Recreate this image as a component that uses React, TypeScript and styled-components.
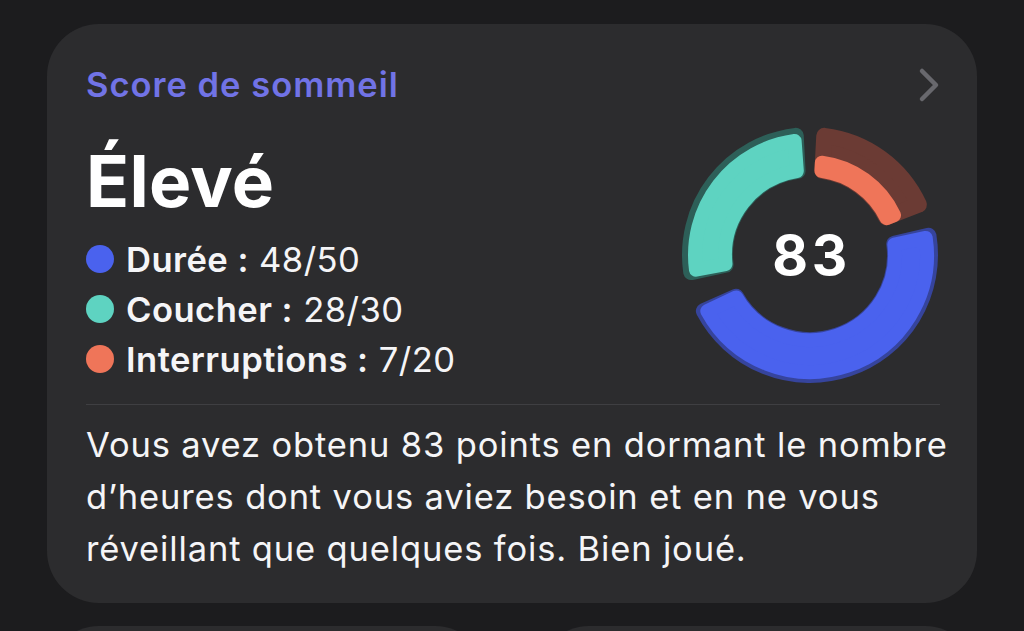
import React from 'react'
import styled, { createGlobalStyle } from 'styled-components'

const GlobalStyle = createGlobalStyle`
  html, body {
    margin: 0;
    padding: 0;
    background: #1c1c1e;
    overflow: hidden;
  }
  body {
    font-family: Inter, 'Noto Sans', sans-serif;
    color: #f5f5f7;
    -webkit-font-smoothing: antialiased;
  }
`

const Page = styled.div`
  width: 1024px;
  height: 631px;
  box-sizing: border-box;
  padding: 24px 47px 0;
  display: flex;
  flex-direction: column;
  gap: 23px;
  overflow: hidden;
`

const Card = styled.section`
  flex: none;
  height: 579px;
  box-sizing: border-box;
  padding: 38px 37px 0 39px;
  background: #2c2c2e;
  border-radius: 52px;
  display: flex;
  flex-direction: column;
`

const Header = styled.div`
  display: flex;
  align-items: center;
  justify-content: space-between;
  height: 46px;
`

const Title = styled.h2`
  margin: 0;
  font-size: 34.5px;
  line-height: 46px;
  letter-spacing: 1px;
  font-weight: 600;
  color: #7173e6;
`

const Chevron = styled.svg`
  width: 22px;
  height: 36px;
`

const MainRow = styled.div`
  display: flex;
  justify-content: space-between;
  align-items: flex-start;
  height: 277px;
`

const Summary = styled.div`
  display: flex;
  flex-direction: column;
  padding-top: 38px;
`

const Level = styled.h1`
  margin: 0 0 18px;
  font-size: 71px;
  line-height: 70px;
  letter-spacing: 0.3px;
  font-weight: 700;
  color: #ffffff;
`

const Legend = styled.ul`
  list-style: none;
  margin: 0;
  padding: 0;
`

const LegendRow = styled.li`
  display: flex;
  align-items: center;
  height: 50px;
  font-size: 34.6px;
  line-height: 50px;
  letter-spacing: 0.45px;
  white-space: nowrap;
`

const Dot = styled.span<{ $color: string }>`
  width: 28px;
  height: 28px;
  border-radius: 50%;
  background: ${p => p.$color};
  margin-right: 12px;
  flex: none;
`

const Label = styled.span`
  font-weight: 600;
`

const Value = styled.span`
  font-weight: 400;
`

const RingWrap = styled.div`
  margin-top: 17px;
  display: grid;
  width: 260px;
  height: 260px;
  & > * {
    grid-area: 1 / 1;
  }
`

const Score = styled.div`
  place-self: center;
  font-size: 55px;
  font-weight: 700;
  color: #ffffff;
  letter-spacing: 3.5px;
  padding-left: 3px;
`

const Divider = styled.hr`
  margin: 19px 0 0;
  border: none;
  height: 1px;
  background: #3f3f42;
`

const Body = styled.p`
  margin: 14px -16px 0 0;
  font-size: 34.5px;
  line-height: 52px;
  letter-spacing: 0.85px;
  font-weight: 400;
  color: #f5f5f7;
`

const BottomRow = styled.div`
  display: flex;
  gap: 50px;
`

const SmallCard = styled.div`
  flex: 1;
  height: 120px;
  background: #2c2c2e;
  border-radius: 52px;
`

const CX = 130
const CY = 130

const pt = (r: number, deg: number) => {
  const a = (deg * Math.PI) / 180
  return `${(CX + r * Math.sin(a)).toFixed(2)} ${(CY - r * Math.cos(a)).toFixed(2)}`
}

// annular sector shrunk by the corner radius, later stroked with round joins
const sector = (r0: number, r1: number, a0: number, a1: number, cr: number) => {
  const ro = r1 - cr
  const ri = r0 + cr
  const io = (cr / ro) * (180 / Math.PI)
  const ii = (cr / ri) * (180 / Math.PI)
  const large = a1 - a0 > 180 ? 1 : 0
  return [
    `M ${pt(ro, a0 + io)}`,
    `A ${ro} ${ro} 0 ${large} 1 ${pt(ro, a1 - io)}`,
    `L ${pt(ri, a1 - ii)}`,
    `A ${ri} ${ri} 0 ${large} 0 ${pt(ri, a0 + ii)}`,
    'Z',
  ].join(' ')
}

type Segment = {
  from: number
  to: number
  fillOuter: number
  inset: number
  track: string
  fill: string
}

const INNER = 78
const OUTER = 128

const segments: Segment[] = [
  { from: 3, to: 69, fillOuter: 100, inset: 0, track: '#6b3b34', fill: '#ef7559' },
  { from: 77, to: 246, fillOuter: 124, inset: 1.2, track: '#36449c', fill: '#4a62ee' },
  { from: 258, to: 357, fillOuter: 122, inset: 1.2, track: '#2d5f58', fill: '#5ed3c1' },
]

const Ring: React.FC = () => (
  <svg width="260" height="260" viewBox="0 0 260 260">
    {segments.map(s => (
      <g key={s.from}>
        <path
          d={sector(INNER - 1, OUTER, s.from, s.to, 8)}
          fill={s.track}
          stroke={s.track}
          strokeWidth={16}
          strokeLinejoin="round"
        />
        <path
          d={sector(INNER, s.fillOuter, s.from + s.inset, s.to - s.inset, 7)}
          fill={s.fill}
          stroke={s.fill}
          strokeWidth={14}
          strokeLinejoin="round"
        />
      </g>
    ))}
  </svg>
)

const legend = [
  { color: '#4a62ee', label: 'Durée :', value: '48/50' },
  { color: '#5ed3c1', label: 'Coucher :', value: '28/30' },
  { color: '#ef7559', label: 'Interruptions :', value: '7/20' },
]

export default function App() {
  return (
    <>
      <GlobalStyle />
      <Page>
        <Card>
          <Header>
            <Title>Score de sommeil</Title>
            <Chevron viewBox="0 0 22 36">
              <polyline
                points="4,4 18,18 4,32"
                fill="none"
                stroke="#68686d"
                strokeWidth="4.5"
                strokeLinecap="round"
                strokeLinejoin="round"
              />
            </Chevron>
          </Header>
          <MainRow>
            <Summary>
              <Level>Élevé</Level>
              <Legend>
                {legend.map(l => (
                  <LegendRow key={l.label}>
                    <Dot $color={l.color} />
                    <Label>{l.label}</Label>
                    <Value>&nbsp;{l.value}</Value>
                  </LegendRow>
                ))}
              </Legend>
            </Summary>
            <RingWrap>
              <Ring />
              <Score>83</Score>
            </RingWrap>
          </MainRow>
          <Divider />
          <Body>
            Vous avez obtenu 83 points en dormant le nombre d’heures dont vous aviez besoin et en ne vous
            réveillant que quelques fois. Bien joué.
          </Body>
        </Card>
        <BottomRow>
          <SmallCard />
          <SmallCard />
        </BottomRow>
      </Page>
    </>
  )
}
